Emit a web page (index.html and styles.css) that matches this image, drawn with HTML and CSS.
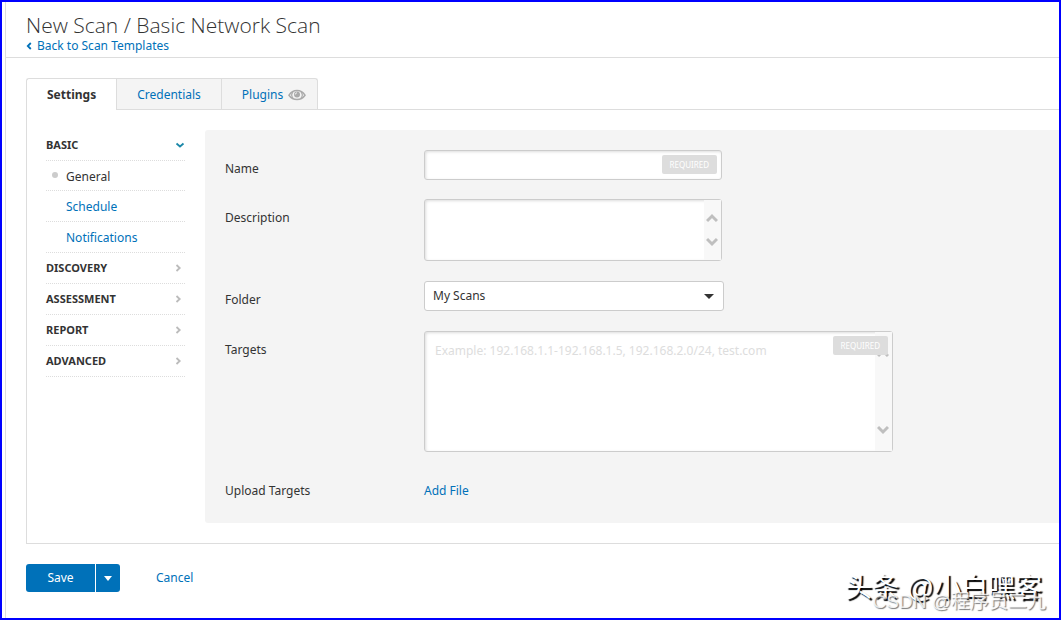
FILE: index.html
```html
<!DOCTYPE html>
<html lang="en">
<head>
<meta charset="utf-8">
<meta name="viewport" content="width=device-width, initial-scale=1">
<title>New Scan / Basic Network Scan</title>
<link rel="stylesheet" href="styles.css">
</head>
<body>
<div class="frame">
  <div class="page">
    <header class="header">
      <h1 class="title">New Scan / Basic Network Scan</h1>
      <a class="back" href="#"><svg width="6" height="8" viewBox="0 0 6 8"><path d="M4.8 1 1.8 4l3 3" fill="none" stroke="currentColor" stroke-width="1.8"/></svg>Back to Scan Templates</a>
    </header>

    <main class="content">
      <nav class="tabs">
        <a class="tab tab-active" href="#">Settings</a>
        <a class="tab" href="#">Credentials</a>
        <a class="tab tab-last" href="#">Plugins
          <svg class="eye" width="18" height="12" viewBox="0 0 18 12"><path d="M1 6.2C3 3 5.800 1.500 9 1.500s6 1.500 8 4.700c-2 2.900-4.800 4.300-8 4.300S3 9.100 1 6.200z" fill="none" stroke="#aaa" stroke-width="1.500"/><path d="M5 3a4.500 4.500 0 0 0 0 6M13 3a4.500 4.500 0 0 1 0 6" fill="none" stroke="#aaa" stroke-width="1.200"/><circle cx="9" cy="5.500" r="3" fill="#aaa"/><path d="M7.300 5.500A1.700 1.700 0 0 1 9 3.800" fill="none" stroke="#f4f4f4" stroke-width="1"/></svg>
        </a>
      </nav>

      <section class="panel">
        <nav class="menu">
          <a class="menu-group" href="#">BASIC<svg class="chev chev-open" width="10" height="10" viewBox="0 0 10 10"><path d="M1.500 3.500 5 6.500l3.500-3" fill="none" stroke="currentColor" stroke-width="1.800"/></svg></a>
          <a class="menu-item menu-current" href="#">General</a>
          <a class="menu-item" href="#">Schedule</a>
          <a class="menu-item" href="#">Notifications</a>
          <a class="menu-group" href="#">DISCOVERY<svg class="chev" width="8" height="10" viewBox="0 0 8 10"><path d="M1.500 2 4.700 5 1.500 8" fill="none" stroke="currentColor" stroke-width="1.800"/></svg></a>
          <a class="menu-group" href="#">ASSESSMENT<svg class="chev" width="8" height="10" viewBox="0 0 8 10"><path d="M1.500 2 4.700 5 1.500 8" fill="none" stroke="currentColor" stroke-width="1.800"/></svg></a>
          <a class="menu-group" href="#">REPORT<svg class="chev" width="8" height="10" viewBox="0 0 8 10"><path d="M1.500 2 4.700 5 1.500 8" fill="none" stroke="currentColor" stroke-width="1.800"/></svg></a>
          <a class="menu-group" href="#">ADVANCED<svg class="chev" width="8" height="10" viewBox="0 0 8 10"><path d="M1.500 2 4.700 5 1.500 8" fill="none" stroke="currentColor" stroke-width="1.800"/></svg></a>
        </nav>

        <form class="form">
          <div class="row row-close">
            <label class="label" for="name">Name</label>
            <div class="field field-short">
              <input class="box input" id="name" type="text">
              <span class="required">REQUIRED</span>
            </div>
          </div>
          <div class="row">
            <label class="label" for="description">Description</label>
            <div class="field field-short">
              <textarea class="box area area-small" id="description"></textarea>
              <div class="scroll scroll-small">
                <svg width="12" height="10" viewBox="0 0 12 10"><path d="M1 8l5-5 5 5" fill="none" stroke="#bfbfbf" stroke-width="3"/></svg>
                <svg width="12" height="10" viewBox="0 0 12 10"><path d="M1 2l5 5 5-5" fill="none" stroke="#bfbfbf" stroke-width="3"/></svg>
              </div>
            </div>
          </div>
          <div class="row">
            <label class="label" for="folder">Folder</label>
            <div class="field field-select">
              <select class="box select" id="folder"><option>My Scans</option></select>
              <svg class="caret" width="10" height="5" viewBox="0 0 10 5"><path d="M0 0h10L5 5z" fill="#333"/></svg>
            </div>
          </div>
          <div class="row">
            <label class="label" for="targets">Targets</label>
            <div class="field field-long">
              <textarea class="box area area-large" id="targets" placeholder="Example: 192.168.1.1-192.168.1.5, 192.168.2.0/24, test.com"></textarea>
              <div class="scroll scroll-large">
                <svg width="12" height="10" viewBox="0 0 12 10"><path d="M1 8l5-5 5 5" fill="none" stroke="#bfbfbf" stroke-width="3"/></svg>
                <svg width="12" height="10" viewBox="0 0 12 10"><path d="M1 2l5 5 5-5" fill="none" stroke="#bfbfbf" stroke-width="3"/></svg>
              </div>
              <span class="required">REQUIRED</span>
            </div>
          </div>
          <div class="row">
            <span class="label">Upload Targets</span>
            <a class="add-file" href="#">Add File</a>
          </div>
        </form>
      </section>

      <footer class="actions">
        <div class="save-group">
          <button class="button save" type="button">Save</button>
          <button class="button more" type="button" aria-label="More save options"><svg width="8" height="5" viewBox="0 0 8 5"><path d="M0 0h8L4 5z" fill="#fff"/></svg></button>
        </div>
        <a class="cancel" href="#">Cancel</a>
      </footer>
    </main>
  </div>
  <div class="mark mark-large">头条 @小白嘿客</div>
  <div class="mark mark-small">CSDN @程序员二九</div>
</div>
</body>
</html>
```
FILE: styles.css
```css
* { box-sizing: border-box; }

body {
  margin: 0;
  background: #fff;
  color: #333;
  font: 12px/18px "Noto Sans", "Open Sans", sans-serif;
}

a { color: #0071b9; text-decoration: none; }
svg { display: block; flex: none; }

.frame {
  position: relative;
  display: flex;
  min-height: calc(100vh - 1px);
  padding-left: 3px;
  border: 2px solid #00f;
}

.page { flex: 1; min-width: 0; border-left: 1px solid #ddd; }

.header { height: 56px; padding: 10px 20px 0; border-bottom: 1px solid #ddd; }
.title { margin: 0; font: 300 21px/26px "Open Sans", "Noto Sans", sans-serif; }
.back { display: flex; align-items: center; gap: 5px; line-height: 16px; }

.content { padding: 20px 0 0 20px; }

.tabs { display: flex; height: 31px; }
.tab {
  display: flex;
  align-items: center;
  gap: 5px;
  padding: 1px 20px 0 20px;
  background: #f4f4f4;
  border: 1px solid #ddd;
  border-width: 1px 0 0 1px;
}
.tab-active {
  z-index: 1;
  height: 32px;
  padding-top: 0;
  background: #fff;
  border-radius: 3px 0 0;
  color: #333;
  font-weight: 700;
}
.tab-last { padding-right: 11px; border-right-width: 1px; border-radius: 0 3px 0 0; }

.panel {
  display: flex;
  gap: 20px;
  padding: 20px 0 20px 19px;
  border: 1px solid #ddd;
  border-right: 0;
}

.menu { display: flex; flex-direction: column; flex: 0 0 139px; }
.menu-group, .menu-item {
  display: flex;
  align-items: center;
  height: 31px;
  border-bottom: 1px dotted #ddd;
}
.menu-group { justify-content: space-between; color: #333; font-size: 11px; font-weight: 700; }
.menu-item { padding: 2px 0 0 20px; }
.menu-current { height: 30px; padding-left: 6px; color: #333; }
.menu-current::before { content: ""; width: 6px; height: 6px; margin: 0 8px 3px 0; border-radius: 50%; background: #ccc; }
.chev { margin-right: 2px; color: #bbb; }
.chev-open { margin-right: 0; color: #1a87a8; }

.form { flex: 1; min-width: 0; padding: 20px 20px 13px; background: #f4f4f4; border-radius: 3px 0 0 3px; }
.row { display: flex; }
.row + .row { margin-top: 20px; }
.row-close + .row { margin-top: 19px; }
.label { flex: 0 0 199px; padding-top: 10px; }
.add-file { padding: 10px 0; }

.field { position: relative; flex: 0 1 auto; }
.field-short { width: 298px; }
.field-select { width: 300px; }
.field-long { width: 469px; }
.box {
  display: block;
  width: 100%;
  margin: 0;
  border: 1px solid #ccc;
  border-radius: 3px;
  background: #fff;
  color: #333;
  font: inherit;
}
.input, .area { padding: 10px; box-shadow: inset 1px 1px 3px #ddd; }
.input { height: 30px; }
.area { resize: none; overflow: hidden; }
.area-small { height: 62px; }
.area-large { height: 121px; }
.area::placeholder { color: #ddd; opacity: 1; }
.select { height: 30px; padding: 0 8px; appearance: none; }
.caret { position: absolute; top: 13px; right: 10px; pointer-events: none; }

.scroll {
  position: absolute;
  top: 1px;
  right: 1px;
  bottom: 1px;
  display: flex;
  flex-direction: column;
  align-items: center;
  justify-content: space-between;
  width: 17px;
  padding-right: 1px;
  background: #f8f8f8;
}
.scroll-small { padding-top: 13px; padding-bottom: 13px; }
.scroll-large { padding-top: 16px; padding-bottom: 16px; }

.required {
  position: absolute;
  top: 5px;
  right: 5px;
  padding: 0 8px;
  border-radius: 2px;
  background: #ddd;
  color: #fff;
  font-size: 8px;
  line-height: 19px;
}

.actions { display: flex; align-items: center; gap: 36px; padding-top: 20px; }
.save-group { display: flex; gap: 1px; }
.button {
  display: flex;
  align-items: center;
  justify-content: center;
  height: 28px;
  padding: 0 21px;
  border: 0;
  background: #0071b9;
  color: #fff;
  font: inherit;
}
.save { min-width: 69px; border-radius: 3px 0 0 3px; }
.more { padding: 0 8px; border-radius: 0 3px 3px 0; }

.mark { position: absolute; white-space: nowrap; pointer-events: none; font-family: "Liberation Sans", "Noto Sans CJK SC", sans-serif; }
.mark-large { right: 17px; bottom: 10px; color: #fff; font-size: 27px; line-height: 40px; text-shadow: 2px 2px 1px #000; }
.mark-small { right: 13px; bottom: 3px; color: rgba(255, 255, 255, 0.8); font-size: 19px; line-height: 26px; text-shadow: 1px 1px 1px #777; }
```
